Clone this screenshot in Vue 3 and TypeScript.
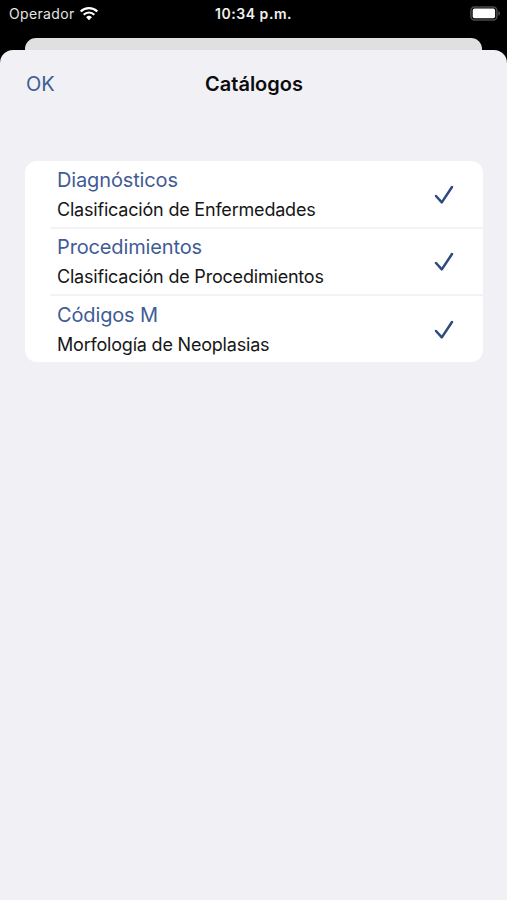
<script setup lang="ts">
interface Catalog {
  id: string
  name: string
  detail: string
}

const catalogs: Catalog[] = [
  { id: 'diag', name: 'Diagnósticos', detail: 'Clasificación de Enfermedades' },
  { id: 'proc', name: 'Procedimientos', detail: 'Clasificación de Procedimientos' },
  { id: 'morf', name: 'Códigos M', detail: 'Morfología de Neoplasias' },
]
</script>

<template>
  <div class="screen">
    <header class="status">
      <div class="carrier">
        <span>Operador</span>
        <svg class="wifi" width="20" height="15" viewBox="0 0 20 15" fill="none" stroke="#fff">
          <path d="M1.7 5.5A11.8 11.8 0 0 1 18.3 5.5" stroke-width="2.3" />
          <path d="M4.7 8.7A7.5 7.5 0 0 1 15.3 8.7" stroke-width="2.2" />
          <path d="M10 14.2L7.1 11.2A4.1 4.1 0 0 1 12.9 11.2Z" fill="#fff" stroke="none" />
        </svg>
      </div>
      <span class="time">10:34 p.m.</span>
      <svg class="battery" width="31" height="15" viewBox="0 0 31 15">
        <rect x="0.9" y="0.9" width="26" height="13" rx="3.6" fill="none" stroke="#4b4b4b" stroke-width="1.5" />
        <rect x="2.7" y="2.6" width="22.4" height="9.6" rx="1.8" fill="#fff" />
        <path d="M28.4 5.2C30.4 5.8 30.4 9 28.4 9.6Z" fill="#5a5a5a" />
      </svg>
    </header>
    <div class="behind"></div>
    <main class="sheet">
      <nav class="bar">
        <button class="ok" type="button">OK</button>
        <h1 class="title">Catálogos</h1>
      </nav>
      <ul class="list">
        <li v-for="item in catalogs" :key="item.id" class="row">
          <div class="text">
            <span class="name">{{ item.name }}</span>
            <span class="detail">{{ item.detail }}</span>
          </div>
          <svg class="check" width="20" height="20" viewBox="0 0 20 20">
            <path d="M2 11L7.8 17.4L18 2" fill="none" stroke="#2d4a82" stroke-width="2.5" stroke-linecap="round" stroke-linejoin="round" />
          </svg>
        </li>
      </ul>
    </main>
  </div>
</template>

<style>
body {
  background: #000;
}
</style>

<style scoped>
.screen {
  height: 900px;
  display: flex;
  flex-direction: column;
  overflow: hidden;
  background: #000;
  font-family: Inter, 'Liberation Sans', sans-serif;
}
.status {
  display: grid;
  grid-template-columns: 1fr auto 1fr;
  height: 38px;
  box-sizing: border-box;
  padding: 5px 6px 0 9px;
  color: #fff;
}
.carrier {
  display: flex;
  height: 18px;
  align-items: center;
  font-size: 14px;
  line-height: 18px;
  letter-spacing: 0.35px;
  color: #e4e4e4;
}
.wifi {
  margin-left: 4px;
  margin-top: -2px;
}
.time {
  margin-right: 3px;
  font-size: 14px;
  line-height: 18px;
  font-weight: 600;
  letter-spacing: 0.55px;
  color: #f0f0f0;
}
.battery {
  justify-self: end;
  margin-top: 1px;
}
.behind {
  flex: none;
  height: 12px;
  margin: 0 25px;
  border-radius: 11px 11px 0 0;
  background: #e0e0e0;
}
.sheet {
  flex: 1;
  border-radius: 13px 13px 0 0;
  background: #f0f0f5;
}
.bar {
  display: grid;
  grid-template-columns: 1fr auto 1fr;
  align-items: center;
  height: 68px;
  padding: 0 25px 0 26px;
}
.ok {
  justify-self: start;
  padding: 0;
  border: 0;
  background: none;
  font: inherit;
  font-size: 20px;
  line-height: 24px;
  color: #3f5f94;
}
.title {
  margin: 0;
  font-size: 20px;
  line-height: 24px;
  font-weight: 600;
  color: #0c0c0e;
}
.list {
  margin: 43px 24px 0 25px;
  padding: 0;
  list-style: none;
  border-radius: 12px;
  background: #fff;
  overflow: hidden;
}
.row {
  display: flex;
  align-items: flex-start;
  justify-content: space-between;
  height: 67px;
  box-sizing: border-box;
  padding: 3px 29px 0 7px;
  margin-left: 25px;
  border-bottom: 2px solid #f3f3f5;
}
.row:first-child {
  height: 68px;
  padding-top: 4px;
}
.row:last-child {
  height: 66px;
  padding-top: 4px;
  border-bottom: 0;
}
.text {
  display: flex;
  flex-direction: column;
}
.name {
  font-size: 20px;
  line-height: 30px;
  letter-spacing: -0.14px;
  color: #3f5c95;
}
.detail {
  font-size: 18px;
  line-height: 29px;
  letter-spacing: -0.2px;
  color: #161616;
}
.check {
  margin-top: 20px;
}
</style>
